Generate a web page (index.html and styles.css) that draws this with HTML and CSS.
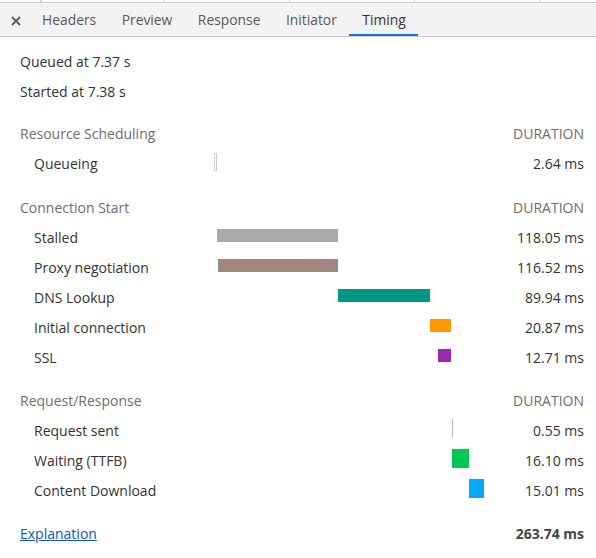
FILE: index.html
```html
<!DOCTYPE html>
<html lang="en">
<head>
<meta charset="utf-8">
<title>Timing</title>
<link rel="stylesheet" href="styles.css">
</head>
<body>
<div class="panel">
  <div class="topstrip">
    <div class="col c0"></div>
    <div class="col c1"></div>
    <div class="col"></div>
    <div class="col"></div>
    <div class="col"></div>
    <div class="col last"></div>
  </div>
  <div class="toolbar">
    <div class="close" aria-label="Close">
      <svg width="10" height="10" viewBox="0 0 10 10"><path d="M1 1 L9 9 M9 1 L1 9" stroke="#5a5a5a" stroke-width="1.8" fill="none"/></svg>
    </div>
    <div class="tab">Headers</div>
    <div class="tab">Preview</div>
    <div class="tab">Response</div>
    <div class="tab">Initiator</div>
    <div class="tab active">Timing</div>
  </div>
  <div class="content">
    <div class="row"><span class="label">Queued at 7.37 s</span></div>
    <div class="row"><span class="label">Started at 7.38 s</span></div>

    <div class="row header gap-s"><span class="label">Resource Scheduling</span><span class="track"></span><span class="value">DURATION</span></div>
    <div class="row sub"><span class="label">Queueing</span><span class="track"><span class="bar queueing" style="left:0px;width:3px"></span></span><span class="value">2.64 ms</span></div>

    <div class="row header gap-l"><span class="label">Connection Start</span><span class="track"></span><span class="value">DURATION</span></div>
    <div class="row sub"><span class="label">Stalled</span><span class="track"><span class="bar thin stalled" style="left:3px;width:121px"></span></span><span class="value">118.05 ms</span></div>
    <div class="row sub"><span class="label">Proxy negotiation</span><span class="track"><span class="bar thin proxy" style="left:4px;width:120px"></span></span><span class="value">116.52 ms</span></div>
    <div class="row sub"><span class="label">DNS Lookup</span><span class="track"><span class="bar thin dns" style="left:124px;width:92px"></span></span><span class="value">89.94 ms</span></div>
    <div class="row sub"><span class="label">Initial connection</span><span class="track"><span class="bar thin connecting" style="left:216px;width:21px"></span></span><span class="value">20.87 ms</span></div>
    <div class="row sub"><span class="label">SSL</span><span class="track"><span class="bar thin ssl" style="left:224px;width:13px"></span></span><span class="value">12.71 ms</span></div>

    <div class="row header gap"><span class="label">Request/Response</span><span class="track"></span><span class="value">DURATION</span></div>
    <div class="row sub"><span class="label">Request sent</span><span class="track"><span class="bar sending" style="left:238px;width:1px"></span></span><span class="value">0.55 ms</span></div>
    <div class="row sub"><span class="label">Waiting (TTFB)</span><span class="track"><span class="bar waiting" style="left:238px;width:17px"></span></span><span class="value">16.10 ms</span></div>
    <div class="row sub"><span class="label">Content Download</span><span class="track"><span class="bar receiving" style="left:255px;width:15px"></span></span><span class="value">15.01 ms</span></div>

    <div class="row gap total"><a class="label link" href="#">Explanation</a><span class="track"></span><span class="value">263.74 ms</span></div>
  </div>
</div>
</body>
</html>
```
FILE: styles.css
```css
html, body {
  margin: 0;
  padding: 0;
  background: #ffffff;
}

body {
  font-family: "Open Sans", "Noto Sans", sans-serif;
  font-size: 13px;
  color: #333333;
}

.panel {
  width: 596px;
  height: 558px;
  overflow: hidden;
}

.topstrip {
  display: flex;
  height: 2px;
  border-bottom: 1px solid #d0d0d0;
}

.topstrip .col {
  width: 124px;
  border-right: 1px solid #d0d0d0;
  flex: none;
}

.topstrip .c0 {
  width: 40px;
}

.topstrip .c1 {
  width: 122px;
  border-left: 1px solid #e0e0e0;
}

.topstrip .last {
  border-right: none;
  flex: 1;
}

.toolbar {
  display: flex;
  align-items: stretch;
  height: 33px;
  background: #f3f3f3;
  border-bottom: 1px solid #cccccc;
}

.close {
  width: 29px;
  display: flex;
  align-items: center;
  justify-content: center;
  padding: 2px 0 0 3px;
  box-sizing: border-box;
}

.close svg {
  display: block;
}

.tab {
  display: flex;
  align-items: center;
  padding: 2px 12.5px 0 13px;
  color: #5a5a5a;
  border-bottom: 2px solid transparent;
  font-size: 13.85px;
}

.tab.active {
  color: #333333;
  border-bottom-color: #1a73e8;
}

.content {
  padding: 9px 12px 0 20px;
}

.row {
  display: flex;
  align-items: center;
  height: 30px;
  font-size: 14px;
}

.row.gap {
  margin-top: 13px;
}

.row.gap-s {
  margin-top: 12px;
}

.row.gap-l {
  margin-top: 14px;
}

.label {
  width: 194px;
  flex: none;
  white-space: nowrap;
}

.row.sub .label {
  padding-left: 14px;
  box-sizing: border-box;
}

.header .label,
.header .value {
  color: #6e6e6e;
}

.track {
  position: relative;
  width: 270px;
  height: 30px;
  flex: none;
}

.value {
  flex: 1;
  text-align: right;
  white-space: nowrap;
}

.total .value {
  font-weight: bold;
  color: #444444;
}

.link {
  color: #1155cc;
  text-decoration: underline;
}

.bar {
  position: absolute;
  top: 4px;
  height: 19px;
  box-sizing: border-box;
}

.bar.thin {
  top: 7px;
  height: 13px;
}

.queueing {
  top: 5px;
  height: 18px;
  border: 1px solid #cccccc;
  background: #ffffff;
}

.stalled { background: #aaaaaa; }
.proxy { background: #a1887f; }
.dns { background: #009688; }
.connecting { background: #ff9800; }
.ssl { background: #9c27b0; }
.sending { background: #b0bec5; }
.waiting { background: #00c853; }
.receiving { background: #03a9f4; }
```
